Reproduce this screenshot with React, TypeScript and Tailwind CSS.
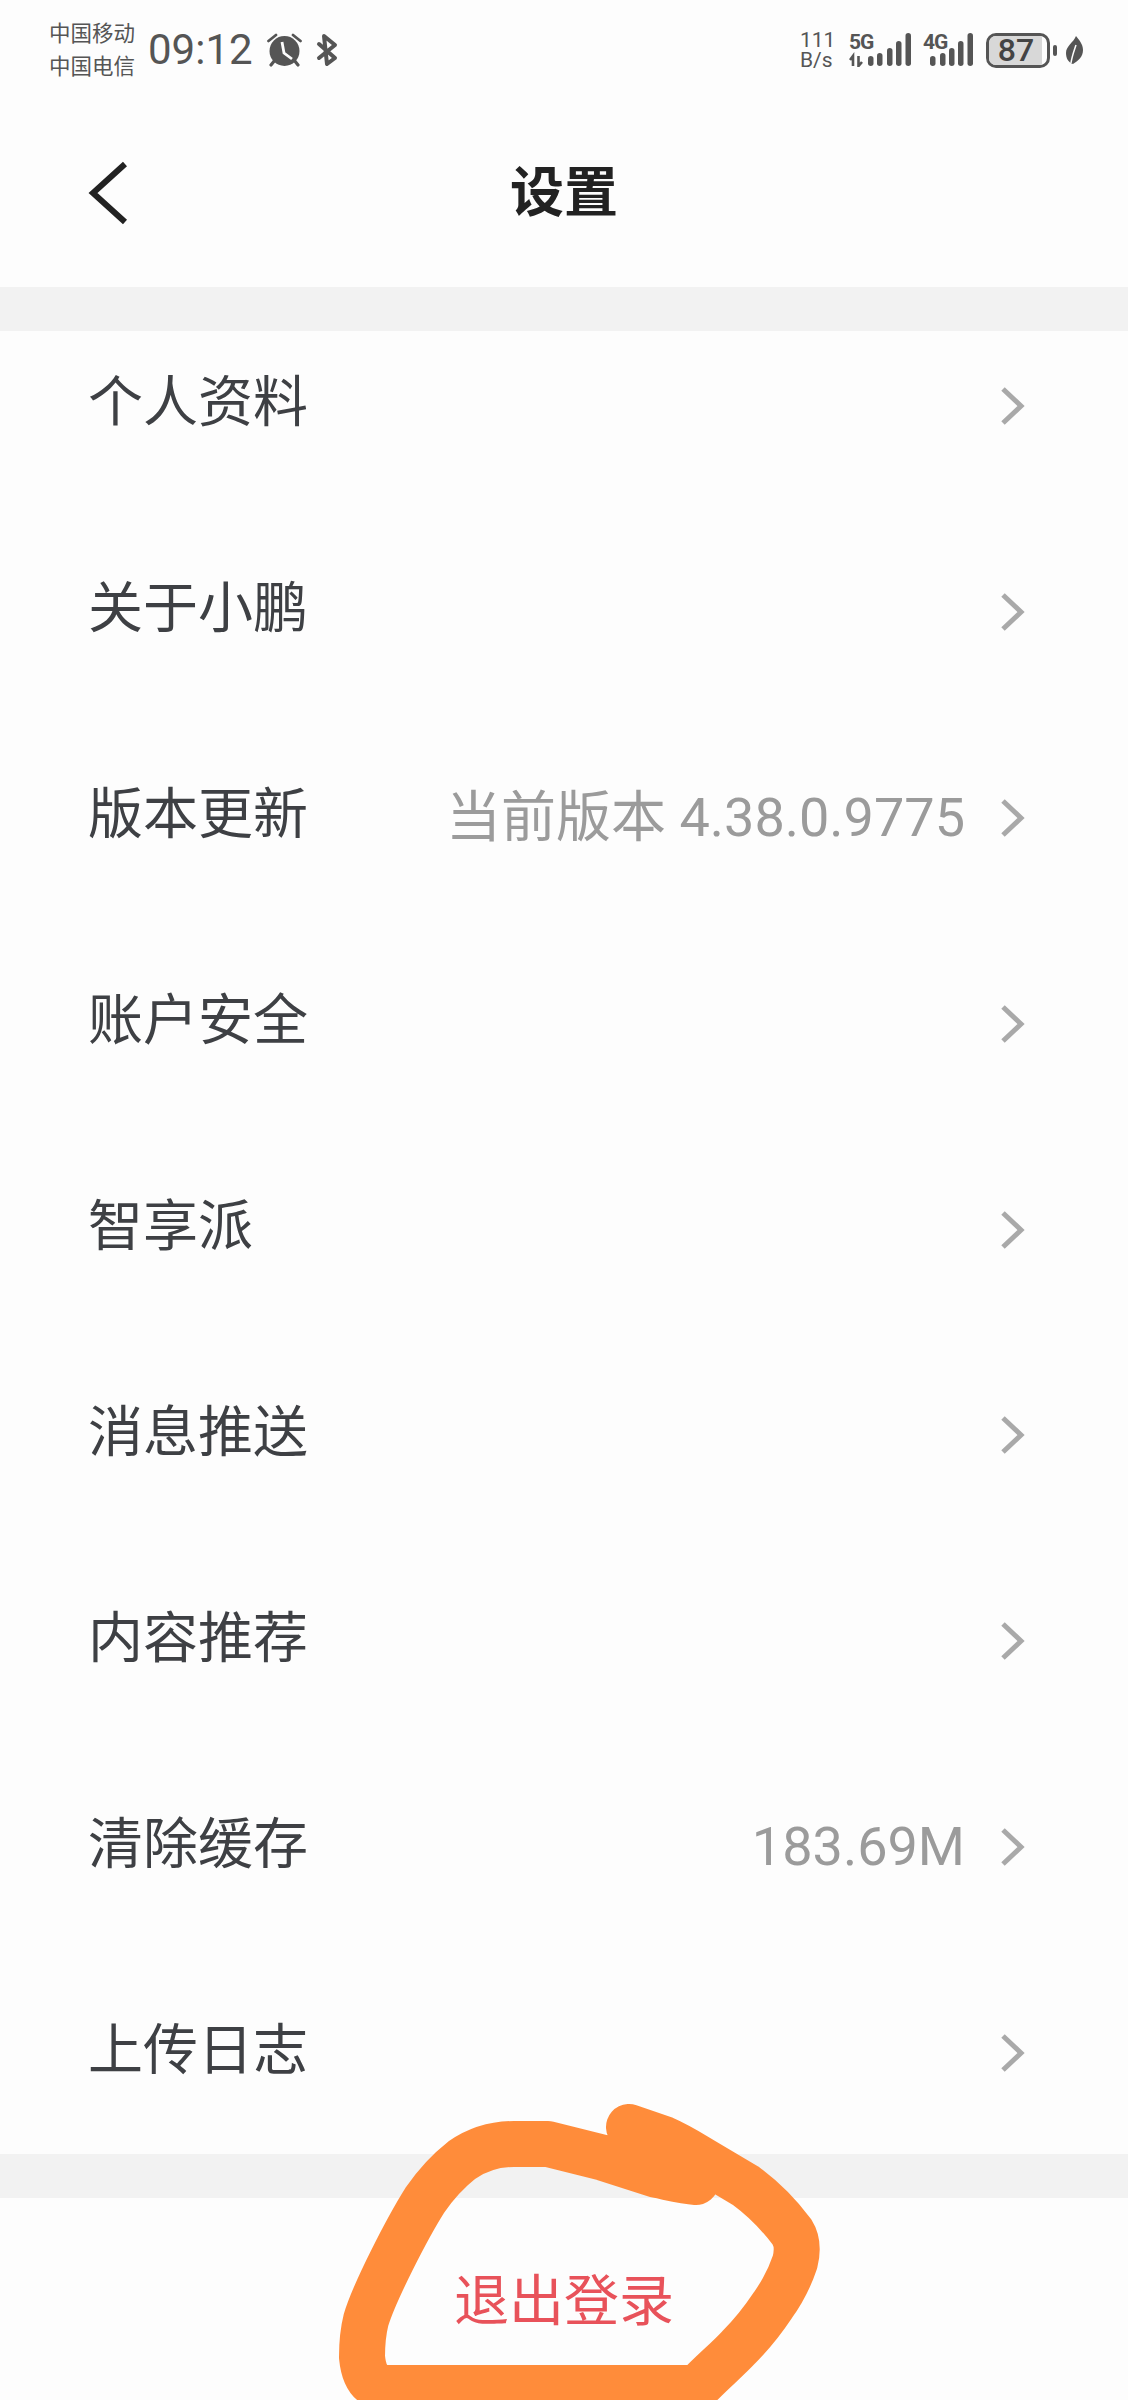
const fontStack = "font-['Roboto','Noto_Sans_CJK_SC',sans-serif]";

const rows = [
  { label: "个人资料" },
  { label: "关于小鹏" },
  { label: "版本更新", prefix: "当前版本", value: " 4.38.0.9775" },
  { label: "账户安全" },
  { label: "智享派" },
  { label: "消息推送" },
  { label: "内容推荐" },
  { label: "清除缓存", value: "183.69M" },
  { label: "上传日志" },
];

function Chevron() {
  return (
    <svg width="25" height="38" viewBox="0 0 25 38" fill="none" className="mt-[6px] shrink-0">
      <path d="M3 2 L21 19 L3 36" stroke="#a9a9a9" strokeWidth="5" />
    </svg>
  );
}

function AlarmIcon() {
  return (
    <svg width="35" height="34" viewBox="0 0 35 34" fill="none">
      <path d="M1.5 8 L9 2 M33.5 8 L26 2" stroke="#555" strokeWidth="2.8" strokeLinecap="round" />
      <path d="M8 27 L4 32 M27 27 L31 32" stroke="#555" strokeWidth="3.2" strokeLinecap="round" />
      <circle cx="17.5" cy="18" r="15" fill="#555" />
      <path d="M15 9 L17 20 L25 26" stroke="#fdfdfd" strokeWidth="2.8" />
    </svg>
  );
}

function BluetoothIcon() {
  return (
    <svg width="22" height="34" viewBox="0 0 22 34" fill="none">
      <path
        d="M3 11 L19 25 L11 31 L8 3 L19 12 L3 25"
        stroke="#555"
        strokeWidth="4"
        strokeLinecap="round"
        strokeLinejoin="round"
      />
    </svg>
  );
}

function LeafIcon() {
  return (
    <svg width="17" height="28" viewBox="0 0 17 28" fill="none">
      <path d="M10 0 C13 4 17 8 17 14 C17 21 12 25 7 28 C2 26 0 22 0 17 C0 10 7 7 10 0 Z" fill="#555" />
      <path d="M5 27 C6 20 8 15 10 9" stroke="#fdfdfd" strokeWidth="1.5" />
    </svg>
  );
}

// bars are given as [x, top] in a 34px tall box
function Signal({ label, width, labelLeft, bars, arrows }: { label: string; width: number; labelLeft: number; bars: number[][]; arrows?: boolean }) {
  return (
    <div className="relative h-[34px] shrink-0" style={{ width }}>
      <svg width={width} height="34" viewBox={`0 0 ${width} 34`} className="absolute left-0 top-0">
        {bars.map(([x, top]) => (
          <rect key={x} x={x} y={top} width="5.5" height={33 - top} rx="2.75" fill="#555" />
        ))}
        {arrows && (
          <path d="M4 33 V23 L1 27 M9.5 23 V33 L13 29" stroke="#555" strokeWidth="2.6" fill="none" />
        )}
      </svg>
      <span
        className="absolute top-[-2px] text-[21px] leading-[22px] font-bold text-[#555] tracking-[-1px] font-['Roboto',sans-serif]"
        style={{ left: labelLeft }}
      >
        {label}
      </span>
    </div>
  );
}

function StatusBar() {
  return (
    <div className={`flex h-[98px] items-center justify-between pl-[49px] pr-[45px] pt-[2px] text-[#555] ${fontStack}`}>
      <div className="flex items-center">
        <div className="w-[86px] text-[21.5px] leading-[33px]">
          <div>中国移动</div>
          <div>中国电信</div>
        </div>
        <span className="ml-[13px] w-[104px] text-[42px] leading-[44px]">09:12</span>
        <div className="ml-[15px] flex"><AlarmIcon /></div>
        <div className="ml-[14px] flex"><BluetoothIcon /></div>
      </div>
      <div className="flex items-center">
        <div className="w-[36px] text-[21px] leading-[20px]">
          <div>111</div>
          <div>B/s</div>
        </div>
        <div className="ml-[13px]">
          <Signal
            label="5G"
            width={62}
            labelLeft={0}
            arrows
            bars={[[19, 23], [28, 20], [38, 15], [47, 8], [56.5, 0]]}
          />
        </div>
        <div className="ml-[12px]">
          <Signal
            label="4G"
            width={50}
            labelLeft={0}
            bars={[[7, 23], [17, 20], [26, 15], [35, 8], [44.5, 0]]}
          />
        </div>
        <div className="ml-[13px] relative h-[35px] w-[64px] overflow-hidden rounded-[10px] border-[3px] border-[#555]">
          <div className="h-full w-[53px] bg-[#d8d8d8]"></div>
          <span className="absolute inset-0 flex items-center justify-center pr-[4px] text-[32px] font-medium leading-none text-[#444]">87</span>
        </div>
        <div className="ml-[3px] h-[11px] w-[4px] rounded-[2px] bg-[#555]"></div>
        <div className="ml-[9px] flex"><LeafIcon /></div>
      </div>
    </div>
  );
}

function ScribbleOverlay() {
  // hand drawn circle around the logout button
  return (
    <svg width="1128" height="2400" viewBox="0 0 1128 2400" fill="none" className="pointer-events-none absolute left-0 top-0">
      <path
        d="M629 2127 L664 2139 C680 2146 692 2154 704 2161 L746 2186 C765 2200 780 2216 792 2232 C797 2240 798 2250 795 2262 C790 2277 783 2291 773 2305 C763 2320 752 2334 739 2347 C727 2360 712 2372 697 2388 L386 2388 C372 2386 364 2378 362 2357 C362 2345 363 2332 366 2320 C372 2300 383 2278 392 2260 C403 2238 413 2219 425 2200 C436 2184 448 2171 462 2160 C478 2149 496 2144 514 2144 L548 2144 L604 2158 L657 2175 C672 2178 684 2181 696 2182"
        stroke="#ff8c3a"
        strokeWidth="46"
        strokeLinecap="round"
        strokeLinejoin="round"
      />
    </svg>
  );
}

export default function App() {
  return (
    <div className={`relative h-[2400px] w-[1128px] overflow-hidden bg-[#fdfdfd] ${fontStack}`}>
      <StatusBar />

      <div className="relative flex h-[189px] items-center justify-center">
        <svg width="40" height="64" viewBox="0 0 40 64" fill="none" className="absolute left-[88px] top-[63px]">
          <path d="M37 3 L5 32 L37 61" stroke="#222" strokeWidth="6" />
        </svg>
        <h1 className="mt-[2px] text-[54px] font-bold leading-none text-[#222]">设置</h1>
      </div>

      <div className="h-[44px] bg-[#f2f2f2]"></div>

      {/* the list is scrolled a little, first row is cut off */}
      <div className="h-[1823px] overflow-hidden">
        <div className="-mt-[31px]">
          {rows.map(r => (
            <div key={r.label} className="flex h-[205.9px] items-center pl-[88px] pr-[103px]">
              <span className="text-[55px] leading-none text-[#3e4044]">{r.label}</span>
              <span className="ml-auto mr-[35px] mt-[6px] whitespace-pre text-[54px] leading-none text-[#9b9b9b]">
                {r.prefix && <span className="text-[55px]">{r.prefix}</span>}
                {r.value}
              </span>
              <Chevron />
            </div>
          ))}
        </div>
      </div>

      <div className="h-[44px] bg-[#f2f2f2]"></div>

      <div className="flex h-[202px] items-center justify-center">
        <span className="mt-[5px] text-[55px] leading-none text-[#e8525a]">退出登录</span>
      </div>

      <ScribbleOverlay />
    </div>
  );
}
